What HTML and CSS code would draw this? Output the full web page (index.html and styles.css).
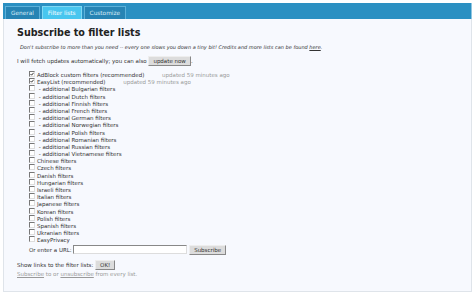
FILE: index.html
```html
<!DOCTYPE html>
<html lang="en">
<head>
    <meta charset="UTF-8">
    <title>AdBlock Options</title>
    <link rel="stylesheet" href="styles.css">
</head>
<body>
    <div class="wrap">
        <div class="tabs">
            <span class="tab">General</span>
            <span class="tab active">Filter lists</span>
            <span class="tab">Customize</span>
        </div>
        <div class="panel">
            <h1>Subscribe to filter lists</h1>
            <p class="note">Don't subscribe to more than you need -- every one slows you down a tiny bit! Credits and more lists can be found <u>here</u>.</p>
            <p class="fetch">I will fetch updates automatically; you can also <button class="btn">update now</button>.</p>

            <ul class="lists">
                <li><span class="box on"></span>AdBlock custom filters (recommended) <span class="upd">updated 59 minutes ago</span></li>
                <li><span class="box on"></span>EasyList (recommended) <span class="upd">updated 59 minutes ago</span></li>
                <li><span class="box"></span> - additional Bulgarian filters</li>
                <li><span class="box"></span> - additional Dutch filters</li>
                <li><span class="box"></span> - additional Finnish filters</li>
                <li><span class="box"></span> - additional French filters</li>
                <li><span class="box"></span> - additional German filters</li>
                <li><span class="box"></span> - additional Norwegian filters</li>
                <li><span class="box"></span> - additional Polish filters</li>
                <li><span class="box"></span> - additional Romanian filters</li>
                <li><span class="box"></span> - additional Russian filters</li>
                <li><span class="box"></span> - additional Vietnamese filters</li>
                <li><span class="box"></span>Chinese filters</li>
                <li><span class="box"></span>Czech filters</li>
                <li><span class="box"></span>Danish filters</li>
                <li><span class="box"></span>Hungarian filters</li>
                <li><span class="box"></span>Israeli filters</li>
                <li><span class="box"></span>Italian filters</li>
                <li><span class="box"></span>Japanese filters</li>
                <li><span class="box"></span>Korean filters</li>
                <li><span class="box"></span>Polish filters</li>
                <li><span class="box"></span>Spanish filters</li>
                <li><span class="box"></span>Ukranian filters</li>
                <li><span class="box"></span>EasyPrivacy</li>
                <li class="url">Or enter a URL: <input type="text" class="url-input"> <button class="btn">Subscribe</button></li>
            </ul>

            <p class="show">Show links to the filter lists: <button class="btn">OK!</button></p>
            <p class="every"><u>Subscribe</u> to or <u>unsubscribe</u> from every list.</p>
        </div>
    </div>
</body>
</html>
```

FILE: styles.css
```css
body {
    margin: 0;
    background-color: #fff;
    color: #333;
    font-family: "DejaVu Sans", Verdana, sans-serif;
    font-size: 5.5px;
}
.wrap {
    margin: 3px 3px 3px 3px;
}
.tabs {
    display: flex;
    align-items: flex-end;
    gap: 2px;
    height: 16px;
    padding-left: 2px;
    background-color: #2b90c2;
    border-right: 1px solid #8ec6e2;
}
.tab {
    height: 12px;
    line-height: 12px;
    padding: 0 5px;
    font-size: 5.8px;
    color: #d7ecf7;
    border: 1px solid #5db1d9;
    border-bottom: none;
    background-color: #2784b4;
}
.tab.active {
    background-color: #48c6ef;
    border-color: #7fd8f4;
    color: #fff;
}
.panel {
    height: 273px;
    box-sizing: border-box;
    padding: 8px 13px;
    background-color: #f7f9fe;
    border: 1px solid #dfe4ea;
    border-top: none;
}
h1 {
    margin: 0;
    font-size: 9.6px;
    color: #222;
}
p {
    margin: 0;
}
.note {
    margin-top: 6px;
    padding-left: 3px;
    font-style: italic;
    font-size: 5px;
}
.fetch {
    margin-top: 6px;
}
.btn {
    font-family: inherit;
    font-size: 5.5px;
    color: #333;
    padding: 1px 4px;
    background-color: #dcdcdc;
    border: 1px solid #999;
    border-color: #eee #888 #888 #eee;
    border-radius: 0;
}
.lists {
    list-style: none;
    margin: 5px 0 0 0;
    padding-left: 12px;
}
.lists li {
    height: 7.2px;
    line-height: 7.2px;
    white-space: nowrap;
}
.box {
    display: inline-block;
    width: 4px;
    height: 4px;
    margin-right: 2px;
    vertical-align: -0.5px;
    background-color: #fff;
    border: 1px solid #999;
    border-color: #777 #ddd #ddd #777;
}
.box.on {
    background: #fff url("data:image/svg+xml,%3Csvg xmlns='http://www.w3.org/2000/svg' viewBox='0 0 4 4'%3E%3Cpath d='M0.5 2 L1.6 3.2 L3.6 0.8' fill='none' stroke='%23222' stroke-width='0.9'/%3E%3C/svg%3E") no-repeat center / 100%;
}
.upd {
    margin-left: 16px;
    color: #999;
}
.lists li.url {
    height: 10px;
    line-height: 10px;
    margin-top: 1px;
}
.url-input {
    width: 112px;
    height: 7px;
    padding: 0;
    vertical-align: middle;
    border: 1px solid #999;
    border-color: #888 #ddd #ddd #888;
}
.show {
    margin-top: 5px;
}
.every {
    margin-top: 1px;
    color: #999;
}
```
